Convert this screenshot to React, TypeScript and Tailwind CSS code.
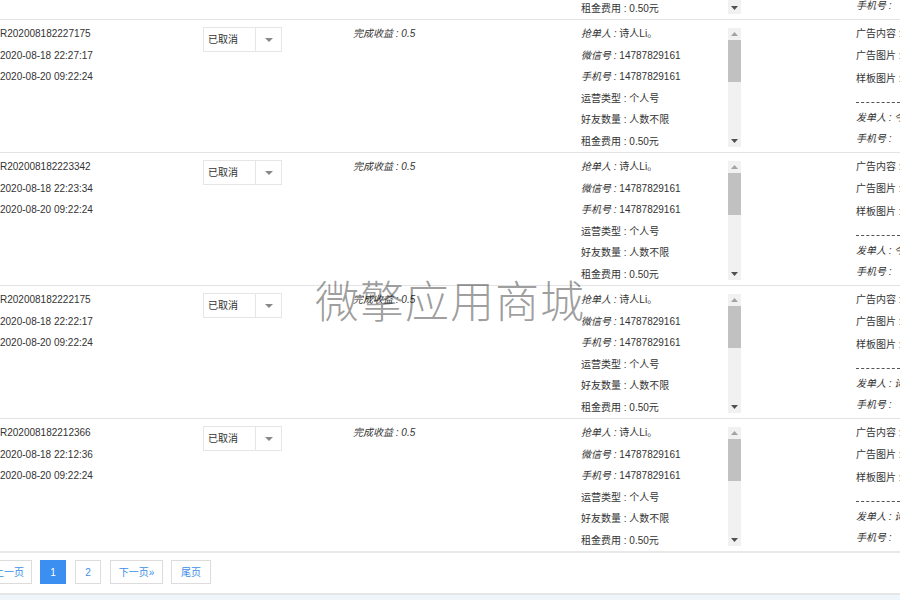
import React from "react";

type RowData = { id: string; created: string; done: string; sender: string };

const rows: RowData[] = [
  { id: "R202008182227175", created: "2020-08-18 22:27:17", done: "2020-08-20 09:22:24", sender: "今" },
  { id: "R202008182223342", created: "2020-08-18 22:23:34", done: "2020-08-20 09:22:24", sender: "今" },
  { id: "R202008182222175", created: "2020-08-18 22:22:17", done: "2020-08-20 09:22:24", sender: "诗" },
  { id: "R202008182212366", created: "2020-08-18 22:12:36", done: "2020-08-20 09:22:24", sender: "诗" },
];

function ScrollBar() {
  return (
    <div className="mt-[8px] h-[119px] w-[13px] bg-[#f1f1f1] flex flex-col items-center">
      <div className="h-[12px] w-full flex items-center justify-center">
        <svg width="7" height="4" viewBox="0 0 7 4">
          <path d="M0 4 L3.5 0 L7 4 Z" fill="#a3a3a3" />
        </svg>
      </div>
      <div className="h-[42px] w-full bg-[#c1c1c1]" />
      <div className="flex-1" />
      <div className="h-[12px] w-full flex items-center justify-center">
        <svg width="7" height="4" viewBox="0 0 7 4">
          <path d="M0 0 L3.5 4 L7 0 Z" fill="#505050" />
        </svg>
      </div>
    </div>
  );
}

function Row({ r }: { r: RowData }) {
  return (
    <div className="flex h-[133px] border-t border-[#e3e3e3] text-[10px] text-[#333]">
      <div className="w-[203px] shrink-0 pt-[3px] leading-[21.5px]">
        <div>{r.id}</div>
        <div>{r.created}</div>
        <div>{r.done}</div>
      </div>
      <div className="w-[150px] shrink-0 pt-[7px]">
        <div className="flex h-[25px] w-[79px] border border-[#e6e6e6] bg-white">
          <div className="flex w-[51px] items-center pl-[4px]">已取消</div>
          <div className="flex flex-1 items-center justify-center border-l border-[#e6e6e6]">
            <svg width="8" height="4" viewBox="0 0 8 4">
              <path d="M0 0 L4 4 L8 0 Z" fill="#888" />
            </svg>
          </div>
        </div>
      </div>
      <div className="w-[228px] shrink-0 pt-[3px] leading-[21.5px] italic whitespace-pre">完成收益 : 0.5</div>
      <div className="flex w-[160px] shrink-0 items-start">
        <div className="h-[131px] w-[147px] overflow-hidden whitespace-pre pt-[3px] leading-[21.5px]">
          <div><span className="italic">抢单人 : </span>诗人Li。</div>
          <div><span className="italic">微信号 : </span>14787829161</div>
          <div><span className="italic">手机号 : </span>14787829161</div>
          <div>运营类型 : 个人号</div>
          <div>好友数量 : 人数不限</div>
          <div>租金费用 : 0.50元</div>
        </div>
        <ScrollBar />
      </div>
      <div className="w-[115px] shrink-0" />
      <div className="flex-1 overflow-hidden whitespace-pre pt-[3px]">
        <div className="h-[22px] leading-[22px]">广告内容 :</div>
        <div className="h-[22px] leading-[22px]">广告图片 :</div>
        <div className="h-[24px] leading-[24px]">样板图片 :</div>
        <div className="mt-[11px] border-t border-dashed border-[#555]" />
        <div className="mt-[4px] h-[21px] leading-[21px] italic">发单人 : {r.sender}</div>
        <div className="h-[21px] leading-[21px] italic">手机号 :</div>
      </div>
    </div>
  );
}

export default function App() {
  return (
    <div
      className="relative h-[600px] w-[900px] overflow-hidden bg-white"
      style={{ fontFamily: '"Liberation Sans", "Noto Sans CJK SC", sans-serif' }}
    >
      <div className="h-[19px] overflow-hidden">
        <div className="-mt-[114px]">
          <Row r={rows[0]} />
        </div>
      </div>
      {rows.map((r) => (
        <Row key={r.id} r={r} />
      ))}
      <div className="h-[42px] border-t-2 border-[#e8e8e8] pt-[7px]">
        <div className="flex gap-[8px] text-[10px] text-[#3b8ee8]">
          <div className="-ml-[14px] flex h-[24px] w-[46px] items-center justify-center border border-[#dcdcdc]">上一页</div>
          <div className="flex h-[24px] w-[26px] items-center justify-center border border-[#3b8ff0] bg-[#3b8ff0] text-white">1</div>
          <div className="ml-[1px] flex h-[24px] w-[26px] items-center justify-center border border-[#dcdcdc]">2</div>
          <div className="ml-[1px] flex h-[24px] w-[53px] items-center justify-center border border-[#dcdcdc]">下一页»</div>
          <div className="flex h-[24px] w-[40px] items-center justify-center border border-[#dcdcdc]">尾页</div>
        </div>
      </div>
      <div className="h-[20px] border-t-2 border-[#e6e6e6] bg-[#eef6fc]" />
      <div
        className="pointer-events-none absolute left-[315px] top-[274px] whitespace-nowrap text-[44px] font-light leading-[50px] tracking-[1px] text-black/40"
        style={{ fontFamily: '"Noto Sans CJK SC", sans-serif' }}
      >
        微擎应用商城
      </div>
    </div>
  );
}
